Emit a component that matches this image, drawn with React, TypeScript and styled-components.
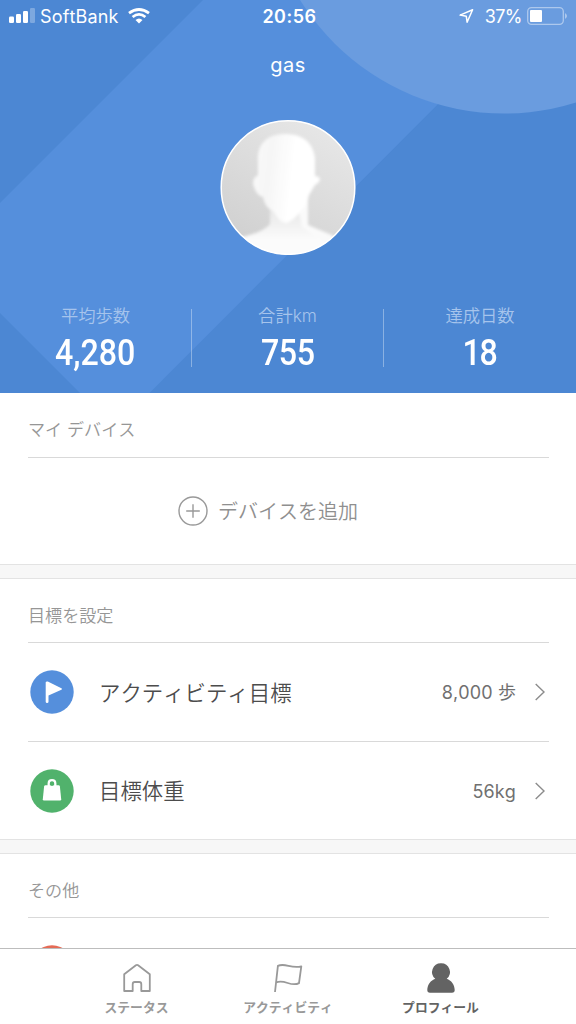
import React from "react";
import styled, { createGlobalStyle } from "styled-components";

const GlobalStyle = createGlobalStyle`
  * { box-sizing: border-box; }
  body { margin: 0; background: #fff; }
`;

const jp = `Inter, "Noto Sans CJK JP", sans-serif`;

const Screen = styled.div`
  width: 576px;
  height: 1024px;
  display: flex;
  flex-direction: column;
  overflow: hidden;
  background: #fff;
  font-family: ${jp};
  font-kerning: none;
`;

const Header = styled.header`
  position: relative;
  height: 393px;
  flex: none;
  display: flex;
  flex-direction: column;
  align-items: center;
  background: #4c87d3;
  color: #fff;
  overflow: hidden;
`;

const Backdrop = styled.svg`
  position: absolute;
  inset: 0;
`;

const StatusBar = styled.div`
  position: relative;
  width: 100%;
  height: 32px;
  padding: 0 9px;
  display: grid;
  grid-template-columns: 1fr auto 1fr;
  align-items: center;
  line-height: 31px;
`;

const StatusGroup = styled.div<{ $end?: boolean }>`
  display: flex;
  align-items: center;
  justify-content: ${(p) => (p.$end ? "flex-end" : "flex-start")};
  height: 31px;
`;

const Carrier = styled.span`
  margin: 0 9px 0 5px;
  padding-top: 1px;
  font-size: 18px;
  letter-spacing: 0.15px;
`;

const Clock = styled.span`
  padding: 0 0 0 3px;
  font-size: 18px;
  font-weight: 600;
  letter-spacing: 0.5px;
`;

const Percent = styled.span`
  margin: 0 5px 0 11px;
  padding-top: 1px;
  font-size: 18px;
  letter-spacing: -0.55px;
`;

const UserName = styled.h1`
  position: relative;
  margin: 17px 0 0;
  height: 32px;
  line-height: 32px;
  font-size: 20px;
  font-weight: 400;
  letter-spacing: 0.5px;
`;

const Avatar = styled.svg`
  position: relative;
  display: block;
  margin-top: 38px;
  flex: none;
`;

const Stats = styled.div`
  position: relative;
  display: grid;
  grid-template-columns: 191px 192px 193px;
  width: 100%;
  height: 58px;
  margin-top: 54px;
`;

const Stat = styled.div`
  height: 58px;
  display: flex;
  flex-direction: column;
  align-items: center;
  & + & {
    border-left: 1px solid rgba(255, 255, 255, 0.35);
  }
`;

const StatLabel = styled.span`
  height: 16px;
  line-height: 14px;
  font-size: 17.3px;
  font-weight: 350;
  color: #a6c4ec;
`;

const StatValue = styled.strong<{ $spacing?: number }>`
  margin-top: 10px;
  height: 32px;
  line-height: 36px;
  font-family: Roboto, sans-serif;
  font-size: 37px;
  font-weight: 500;
  letter-spacing: ${(p) => p.$spacing ?? 0}px;
  transform: scaleX(0.87);
`;

const Section = styled.section<{ $height: number }>`
  height: ${(p) => p.$height}px;
  flex: none;
  padding: 0 27.5px;
`;

const SectionTitle = styled.h2<{ $height?: number }>`
  margin: 0;
  height: ${(p) => p.$height ?? 64}px;
  padding: 10px 0 0 0.5px;
  line-height: 54px;
  border-bottom: 1px solid #d9d9d9;
  font-size: 17.1px;
  font-weight: 350;
  color: #969696;
`;

const Gap = styled.div`
  height: 15px;
  flex: none;
  background: #f7f7f7;
  border-top: 1px solid #e3e3e3;
  border-bottom: 1px solid #e3e3e3;
`;

const AddDevice = styled.button`
  width: 100%;
  height: 106px;
  padding: 0 40px 0 0;
  border: 0;
  background: none;
  display: flex;
  align-items: center;
  justify-content: center;
  gap: 10px;
  font-family: ${jp};
  font-kerning: none;
  font-size: 20px;
  font-weight: 350;
  line-height: 30px;
  color: #8f8f8f;
`;

const AddLabel = styled.span`
  padding-top: 2px;
`;

const Row = styled.div`
  height: 98px;
  padding: 0 2.5px;
  display: flex;
  align-items: center;
  & + & {
    border-top: 1px solid #d9d9d9;
  }
`;

const RowLabel = styled.span`
  flex: 1;
  margin-left: 25px;
  padding-top: 1px;
  font-size: 21.4px;
  font-weight: 350;
  line-height: 32px;
  color: #4c4c4c;
`;

const RowValue = styled.span`
  margin-right: 18px;
  padding-top: 2px;
  font-size: 18px;
  font-weight: 400;
  line-height: 28px;
  letter-spacing: 0.1px;
  color: #707070;
`;

const TabBar = styled.nav`
  position: relative;
  height: 76px;
  margin-top: auto;
  flex: none;
  padding: 0 60px 0 61px;
  display: grid;
  grid-template-columns: 151px 152px 153px;
  background: #fff;
  border-top: 1px solid #bdbdbd;
`;

const Tab = styled.a<{ $active?: boolean }>`
  display: flex;
  flex-direction: column;
  align-items: center;
  padding-top: 13px;
  color: ${(p) => (p.$active ? "#636363" : "#999")};
`;

const TabLabel = styled.span`
  margin-top: 4px;
  font-size: 12.8px;
  line-height: 20px;
  font-weight: 600;
  white-space: nowrap;
`;

const Content = styled.main`
  flex: 1;
  min-height: 0;
  overflow: hidden;
  display: flex;
  flex-direction: column;
`;

const Signal = () => (
  <svg width="26" height="16" viewBox="0 0 26 16" fill="#fff">
    <rect x="0" y="8.5" width="5" height="6.5" rx="1.3" />
    <rect x="7" y="6" width="5" height="9" rx="1.3" />
    <rect x="14" y="3" width="5" height="12" rx="1.3" />
    <rect x="21" y="0" width="5" height="15" rx="1.3" opacity=".28" />
  </svg>
);

const Wifi = () => (
  <svg width="22" height="16" viewBox="0 0 22 16" fill="none" stroke="#fff" strokeWidth="2.8">
    <path d="M1 5.2Q11-2.2 21 5.2" />
    <path d="M4.6 9Q11 3.8 17.4 9" />
    <path d="M11 15.4 7.5 12.1Q11 9 14.5 12.1Z" fill="#fff" stroke="none" />
  </svg>
);

const LocationArrow = () => (
  <svg width="15" height="16" viewBox="0 0 15 16" fill="none" stroke="#fff" strokeWidth="1.5" strokeLinejoin="round">
    <path d="M13.6 1.8 1.1 7.1 7.3 8.3 8.1 14.2Z" />
  </svg>
);

const Battery = () => (
  <svg width="40" height="18" viewBox="0 0 40 18">
    <rect x=".7" y=".7" width="35.6" height="16.6" rx="3.8" fill="none" stroke="#fff" strokeOpacity=".45" strokeWidth="1.3" />
    <rect x="3" y="3" width="12" height="12" rx="1" fill="#fff" />
    <path d="M38 6q4 3 0 6z" fill="#fff" fillOpacity=".45" />
  </svg>
);

const Portrait = () => (
  <Avatar width="136" height="136" viewBox="0 0 136 136">
    <defs>
      <clipPath id="disc"><circle cx="68" cy="68.500" r="67" /></clipPath>
      <linearGradient id="wall" x1=".8" y1="0" x2=".2" y2="1">
        <stop offset="0" stopColor="#e8e8e8" />
        <stop offset="1" stopColor="#cfcfcf" />
      </linearGradient>
      <linearGradient id="neck" x1="0" y1="0" x2="0" y2="1">
        <stop offset="0" stopColor="#e4e4e4" />
        <stop offset=".65" stopColor="#fbfbfb" />
      </linearGradient>
      <linearGradient id="face" x1="0" y1="0" x2="1" y2=".15">
        <stop offset="0" stopColor="#fafafa" />
        <stop offset=".3" stopColor="#f6f6f6" />
        <stop offset=".65" stopColor="#fff" />
      </linearGradient>
      <filter id="soft" x="-20%" y="-20%" width="140%" height="140%"><feGaussianBlur stdDeviation="1.7" /></filter>
    </defs>
    <g clipPath="url(#disc)">
      <rect width="136" height="136" fill="url(#wall)" />
      <g filter="url(#soft)">
        <path d="M50 85H88V106Q96 111 112 117L125 140H10L22 118Q44 113 50 105Z" fill="url(#neck)" />
        <path d="M88 78V106L114 117 105 124 82 108 78 88Z" fill="#fafafa" />
        <path d="M65 15C47 15 37 25 38 42L38 56Q31 60 34 68Q37 77 43 78Q45 89 53 92Q60 104 66 104Q73 102 80 93Q87 87 89 76L95 66Q102 62 99 58L95 57 95 39C93 23 82 15 65 15Z" fill="url(#face)" />
      </g>
    </g>
    <circle cx="68" cy="68.500" r="66.800" fill="none" stroke="#fff" strokeWidth="1.5" />
  </Avatar>
);

const PlusCircle = () => (
  <svg width="30" height="30" viewBox="0 0 30 30" fill="none" stroke="#999" strokeWidth="1.4">
    <circle cx="15" cy="15" r="14" />
    <path d="M8.2 15H21.8M15 8.2V21.8" />
  </svg>
);

const FlagBadge = () => (
  <svg width="44" height="44" viewBox="0 0 44 44">
    <circle cx="22" cy="22" r="21.7" fill="#558fdc" />
    <path d="M15.7 12.3Q16.3 11 17.8 11.6L31.4 18.2Q32.8 19 31.4 19.8L18.5 25.5V31.8Q18.5 33 17.1 33 15.7 33 15.7 31.8Z" fill="#fff" />
  </svg>
);

const WeightBadge = () => (
  <svg width="44" height="44" viewBox="0 0 44 44">
    <circle cx="22" cy="22" r="21.7" fill="#51b26c" />
    <path d="M18.700 17V14.500Q18.700 11.200 22 11.200T25.300 14.500V17" fill="none" stroke="#fff" strokeWidth="2.300" />
    <path d="M15.500 16.200H28.500Q29.700 16.200 29.900 17.500L31.200 30.200Q31.300 31.500 30 31.500H14Q12.700 31.500 12.800 30.200L14.100 17.500Q14.300 16.200 15.500 16.200Z" fill="#fff" />
    <circle cx="22" cy="14.800" r="2.100" fill="#51b26c" />
  </svg>
);

const RedBadge = () => (
  <svg width="44" height="44" viewBox="0 0 44 44">
    <circle cx="22" cy="22" r="21.7" fill="#e56b56" />
  </svg>
);

const Chevron = () => (
  <svg width="12" height="18" viewBox="0 0 12 18" fill="none" stroke="#8c8c8c" strokeWidth="1.4">
    <path d="M1.7 1 10 9 1.7 17" />
  </svg>
);

const HomeIcon = () => (
  <svg width="30" height="32" viewBox="0 0 30 32" fill="none" stroke="currentColor" strokeWidth="1.8" strokeLinejoin="round">
    <path d="M2.2 29V12.2L13.9 3.3Q15 2.5 16.1 3.3L27.8 12.2V29H19.3V22.2Q19.3 20 17.2 20H12.8Q10.7 20 10.7 22.2V29Z" />
  </svg>
);

const FlagIcon = () => (
  <svg width="30" height="32" viewBox="0 0 30 32" fill="none" stroke="currentColor" strokeWidth="1.8" strokeLinejoin="round">
    <path d="M2 30 4.9 3.9C12 .4 18 7 28.3 4.3L26 21.1C18 25.6 12 16.7 3.2 20.4" />
  </svg>
);

const PersonIcon = () => (
  <svg width="30" height="32" viewBox="0 0 30 32" fill="currentColor">
    <path d="M15 1.2A8.800 8.800 0 0 0 9.300 16.800C4.800 18.200 1.300 23 1.300 28.100Q1.300 30.800 4 30.800H26Q28.700 30.800 28.700 28.100C28.700 23 25.200 18.200 20.700 16.800A8.800 8.800 0 0 0 15 1.200Z" />
  </svg>
);

export default function App() {
  return (
    <Screen>
      <GlobalStyle />
      <Header>
        <Backdrop width="576" height="393" viewBox="0 0 576 393">
          <path d="M203 0H542L149.500 393H80L0 313V203Z" fill="#558fdc" />
          <circle cx="504" cy="-126.500" r="240" fill="#6a9cdf" />
        </Backdrop>
        <StatusBar>
          <StatusGroup>
            <Signal />
            <Carrier>SoftBank</Carrier>
            <Wifi />
          </StatusGroup>
          <Clock>20:56</Clock>
          <StatusGroup $end>
            <LocationArrow />
            <Percent>37%</Percent>
            <Battery />
          </StatusGroup>
        </StatusBar>
        <UserName>gas</UserName>
        <Portrait />
        <Stats>
          <Stat>
            <StatLabel>平均歩数</StatLabel>
            <StatValue>4,280</StatValue>
          </Stat>
          <Stat>
            <StatLabel>合計km</StatLabel>
            <StatValue $spacing={-0.5}>755</StatValue>
          </Stat>
          <Stat>
            <StatLabel>達成日数</StatLabel>
            <StatValue $spacing={-1.5}>18</StatValue>
          </Stat>
        </Stats>
      </Header>
      <Content>
        <Section $height={171}>
          <SectionTitle $height={65}>マイ デバイス</SectionTitle>
          <AddDevice>
            <PlusCircle />
            <AddLabel>デバイスを追加</AddLabel>
          </AddDevice>
        </Section>
        <Gap />
        <Section $height={260}>
          <SectionTitle>目標を設定</SectionTitle>
          <Row>
            <FlagBadge />
            <RowLabel>アクティビティ目標</RowLabel>
            <RowValue>8,000 歩</RowValue>
            <Chevron />
          </Row>
          <Row>
            <WeightBadge />
            <RowLabel>目標体重</RowLabel>
            <RowValue>56kg</RowValue>
            <Chevron />
          </Row>
        </Section>
        <Gap />
        <Section $height={180}>
          <SectionTitle>その他</SectionTitle>
          <Row>
            <RedBadge />
          </Row>
        </Section>
      </Content>
      <TabBar>
        <Tab>
          <HomeIcon />
          <TabLabel>ステータス</TabLabel>
        </Tab>
        <Tab>
          <FlagIcon />
          <TabLabel>アクティビティ</TabLabel>
        </Tab>
        <Tab $active>
          <PersonIcon />
          <TabLabel>プロフィール</TabLabel>
        </Tab>
      </TabBar>
    </Screen>
  );
}
